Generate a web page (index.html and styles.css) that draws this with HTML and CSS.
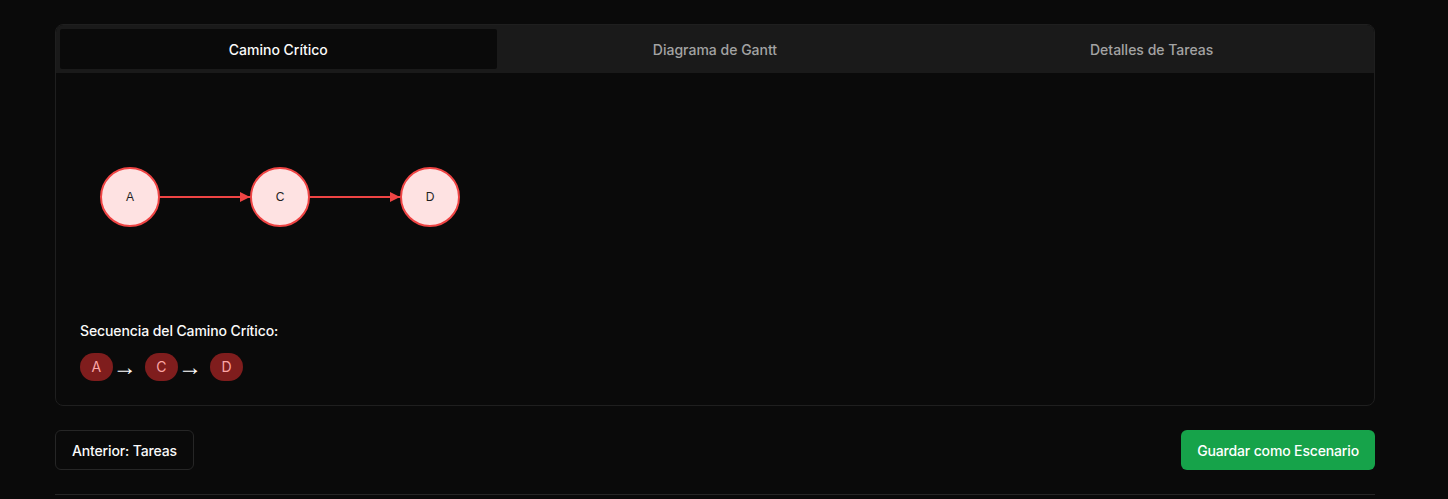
FILE: index.html
```html
<!DOCTYPE html>
<html lang="es">
<head>
<meta charset="utf-8">
<title>Camino Crítico</title>
<link rel="stylesheet" href="styles.css">
</head>
<body>
<div class="page">
  <div class="card">
    <div class="tabs">
      <div class="tab active">Camino Crítico</div>
      <div class="tab">Diagrama de Gantt</div>
      <div class="tab">Detalles de Tareas</div>
    </div>
    <div class="card-body">
      <svg class="graph" width="400" height="200" viewBox="0 0 400 200">
        <defs>
          <marker id="arrow" viewBox="0 0 10 10" refX="10" refY="5" markerWidth="10" markerHeight="10" markerUnits="userSpaceOnUse" orient="auto">
            <path d="M0,0 L10,5 L0,10 z" fill="#ef4444"/>
          </marker>
        </defs>
        <line x1="80" y1="100" x2="170" y2="100" stroke="#ef4444" stroke-width="2" marker-end="url(#arrow)"/>
        <line x1="230" y1="100" x2="320" y2="100" stroke="#ef4444" stroke-width="2" marker-end="url(#arrow)"/>
        <circle cx="50" cy="100" r="29" fill="#fee2e2" stroke="#ef4444" stroke-width="2"/>
        <circle cx="200" cy="100" r="29" fill="#fee2e2" stroke="#ef4444" stroke-width="2"/>
        <circle cx="350" cy="100" r="29" fill="#fee2e2" stroke="#ef4444" stroke-width="2"/>
        <text x="50" y="100" class="node-label">A</text>
        <text x="200" y="100" class="node-label">C</text>
        <text x="350" y="100" class="node-label">D</text>
      </svg>
      <h3 class="seq-title">Secuencia del Camino Crítico:</h3>
      <div class="seq">
        <div class="seq-item"><span class="pill">A</span><span class="arrow">→</span></div>
        <div class="seq-item"><span class="pill">C</span><span class="arrow">→</span></div>
        <div class="seq-item"><span class="pill">D</span></div>
      </div>
    </div>
  </div>
  <div class="actions">
    <button class="btn btn-outline">Anterior: Tareas</button>
    <button class="btn btn-green">Guardar como Escenario</button>
  </div>
  <div class="divider"></div>
</div>
</body>
</html>
```
FILE: styles.css
```css
* { box-sizing: border-box; }
html, body { margin: 0; padding: 0; }
body {
  background: #0a0a0a;
  color: #fafafa;
  font-family: Inter, "Noto Sans", "Liberation Sans", sans-serif;
  height: 499px;
  overflow: hidden;
}
.page {
  width: 1320px;
  margin-left: 55px;
  padding-top: 24px;
}
.card {
  border: 1px solid #1f1f1f;
  border-radius: 8px;
  background: #0a0a0a;
  overflow: hidden;
}
.tabs {
  display: grid;
  grid-template-columns: repeat(3, 1fr);
  background: #1a1a1a;
  padding: 4px;
  height: 48px;
}
.tab {
  display: flex;
  align-items: center;
  justify-content: center;
  font-size: 14px;
  font-weight: 500;
  color: #a3a3a3;
  border-radius: 2px;
}
.tab.active {
  background: #0a0a0a;
  color: #fafafa;
}
.card-body {
  padding: 24px;
}
.graph {
  display: block;
}
.node-label {
  font-family: "Liberation Sans", Arial, sans-serif;
  font-size: 12px;
  fill: #1f1f1f;
  text-anchor: middle;
  dominant-baseline: central;
}
.seq-title {
  margin: 24px 0 12px;
  font-size: 14px;
  line-height: 20px;
  font-weight: 500;
  letter-spacing: -0.1px;
  color: #fafafa;
}
.seq {
  display: flex;
  gap: 8px;
  align-items: center;
}
.seq-item {
  display: flex;
  align-items: center;
}
.pill {
  background: #7f1d1d;
  color: #fca5a5;
  font-size: 14px;
  line-height: 20px;
  padding: 4px 11.5px;
  border-radius: 999px;
}
.arrow {
  margin: 0 4px;
  color: #fafafa;
  font-family: "Liberation Sans", sans-serif;
  font-size: 24px;
  line-height: 20px;
  width: 16px;
  display: flex;
  justify-content: center;
  overflow: visible;
}
.actions {
  display: flex;
  justify-content: space-between;
  margin-top: 24px;
}
.btn {
  font-family: inherit;
  font-size: 14px;
  font-weight: 500;
  height: 40px;
  padding: 0 16px;
  border-radius: 6px;
  letter-spacing: -0.15px;
  cursor: pointer;
}
.btn-outline {
  background: #0a0a0a;
  color: #fafafa;
  border: 1px solid #262626;
}
.btn-green {
  background: #16a34a;
  color: #ffffff;
  border: none;
}
.divider {
  margin-top: 24px;
  border-top: 1px solid #262626;
}
```
